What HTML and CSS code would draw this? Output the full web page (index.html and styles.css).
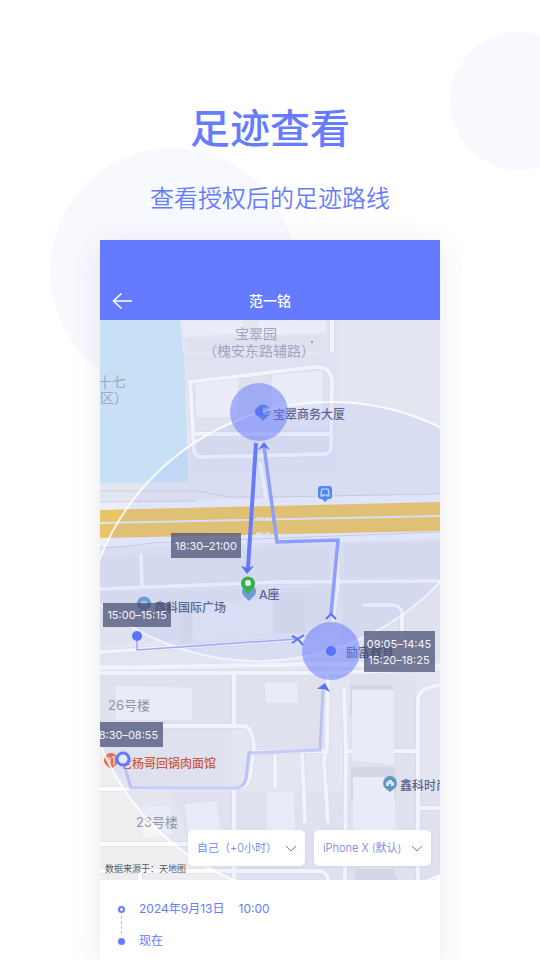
FILE: index.html
```html
<!DOCTYPE html>
<html lang="zh-CN">
<head>
    <meta charset="UTF-8">
    <meta name="viewport" content="width=device-width, initial-scale=1.0">
    <title>足迹查看</title>
    <link rel="stylesheet" href="styles.css">
</head>
<body>

<div class="backdrop">
    <div class="bubble bubble-right"></div>
    <div class="bubble bubble-left"></div>
</div>

<header class="intro">
    <h1>足迹查看</h1>
    <p>查看授权后的足迹路线</p>
</header>

<main class="phone">
    <div class="navbar">
        <button class="back" aria-label="返回">
            <svg width="22" height="18" viewBox="0 0 22 18"><path d="M9.500 1.500 L1.500 9 L9.500 16.500 M2 9 H20" fill="none" stroke="#fff" stroke-width="1.600"/></svg>
        </button>
        <h2>范一铭</h2>
    </div>

    <div class="map">
        <svg class="map-canvas" viewBox="0 0 340 560">
            <rect width="340" height="560" fill="#eeeef0"/>

            <!-- Blocks and water -->
            <path d="M0 0H80L85 50L88 158Q88 162 84 162L0 163Z" fill="#d0e8f6"/>
            <path d="M86 36H220V0H237V152H92Z" fill="#ebebf0"/>
            <g fill="#f6f6f9">
                <path d="M80 0H143V13L84 17ZM158 0H226V12L158 16Z"/>
                <path d="M96 64L138 56V97H96ZM172 55L222 51V92H172Z"/>
            </g>
            <g fill="#e9e9ee">
                <path d="M86 19L220 15V32H88ZM96 98H143V111H96ZM139 56L172 53V90H139ZM97 119H228V131L98 134Z"/>
                <path d="M44 235L230 225V257L45 266ZM0 238L38 236L39 266L0 268ZM244 225L340 221V257H244Z"/>
                <path d="M0 273L232 266V312L0 324ZM242 265H340V341H242Z"/>
                <path d="M63 357H131V468H30L0 430V357ZM138 355H224V428H158L150 406H138ZM138 472H340V560H138ZM250 355H316V560H250ZM70 472H131V521H90Z"/>
            </g>
            <g fill="#dedfe5">
                <path d="M80 284H92V323H80ZM175 273H205V313H175Z" opacity=".5"/>
                <path d="M250 365H292L294 372V395H250ZM251 447H293L296 457V480H251ZM255 549H293L298 560H255Z"/>
            </g>

            <!-- Roads -->
            <g class="road-edge">
                <path d="M0 269L180 262L340 261M0 332L206 319"/>
                <path d="M41 234L42 267M237 218L238 265L233 302M160 142L166 178M0 353H225L340 349"/>
                <path d="M90 60L94 130Q95 137 102 137L225 134Q231 133 231 128L232 60Q230 46 215 47L90 62M94 114H230M232 0V32"/>
                <path d="M263 285H293Q302 286 302 294V318"/>
                <path d="M134 353V405M63 406H145Q153 409 154 428L150 458Q147 468 138 468L0 469M134 470V560M0 524H90M0 551H220Q228 553 228 560M40 552V560"/>
                <path d="M154 432L226 431M228 353L227 428L224 440L228 503M175 435V467M202 433L205 503M244 368L246 430L245 560M246 431H316M340 365Q318 368 318 380V560M319 488H340"/>
            </g>
            <g class="road">
                <path d="M0 186L340 178" stroke-width="8"/>
                <path d="M0 222L340 215" stroke-width="9"/>
                <path d="M0 269L180 262L340 261M0 332L206 319"/>
                <path d="M0 348L230 344L340 346M0 353H225L340 349"/>
                <path d="M41 234L42 267M237 218L238 265L233 302M160 142L166 178"/>
                <path d="M90 60L94 130Q95 137 102 137L225 134Q231 133 231 128L232 60Q230 46 215 47L90 62M94 114H230M232 0V32"/>
                <path d="M263 285H293Q302 286 302 294V318"/>
                <path d="M134 353V405M63 406H145Q153 409 154 428L150 458Q147 468 138 468L0 469M134 470V560M0 524H90M0 551H220Q228 553 228 560M40 552V560"/>
                <path d="M154 432L226 431M228 353L227 428L224 440L228 503M175 435V467M202 433L205 503M244 368L246 430L245 560M246 431H316M340 365Q318 368 318 380V560M319 488H340"/>
            </g>
            <path d="M0 171H97L130 177H160M170 177L340 174M0 182L97 181M0 228L30 226L52 223L340 212" fill="none" stroke="#d6d7de" stroke-width="1"/>
            <path d="M0 190L340 182V195L0 202ZM0 204L340 197V211L0 218Z" fill="#f6cb5a"/>
            <path d="M156 199H174M156 214H170" stroke="#f0eff3" stroke-width="3" stroke-dasharray="7 2"/>

            <!-- Buildings -->
            <g fill="#f5f5f8">
                <path d="M16 366L92 368V400H16ZM165 363H197L198 383H166ZM252 370H294V445L252 440ZM253 457H294L296 520H253ZM167 472H194L195 510H167Z"/>
                <path d="M43 487L70 486L72 515L43 518ZM85 484L117 481L120 512H88Z"/>
                <path d="M93 284L172 279V314L93 320Z" opacity=".5"/>
            </g>

            <!-- Map place names -->
            <g class="area" text-anchor="middle">
                <text x="156" y="19">宝翠园</text>
                <text x="159" y="36">（槐安东路辅路）</text>
            </g>
            <g class="area">
                <text x="-2" y="67">十七</text>
                <text x="0" y="83">区）</text>
            </g>
            <g class="block">
                <text x="8" y="390">26号楼</text>
                <text x="36" y="507">23号楼</text>
            </g>
            <g class="poi">
                <text x="173" y="99">宝翠商务大厦</text>
                <text x="159" y="279">A座</text>
                <text x="54" y="292">鑫科国际广场</text>
                <text x="246" y="337">励富教育</text>
                <text x="300" y="470">鑫科时尚</text>
            </g>
            <text class="food" x="20" y="448">老杨哥回锅肉面馆</text>

            <!-- Place pins -->
            <g>
                <path d="M163 101L157 95A7 7 0 1 1 169 95Z" fill="#4d86b8"/>
                <path d="M169 89Q164 87 163 91Q164 95 169 93" fill="none" stroke="#b5c3f5" stroke-width="1.500"/>
                <path d="M149 281L143 275A7 7 0 1 1 155 275Z" fill="#6f9cc9"/>
                <path d="M44 293L38 287A7 7 0 1 1 50 287Z" fill="#6b9fcb"/>
                <path d="M42 286V282H46V286" fill="none" stroke="#d5def5" stroke-width="1.500"/>
                <path d="M290 472L285 468A7 7 0 1 1 295 468Z" fill="#5c98bd"/>
                <path d="M286 466V462H288V460H292V462H294V466H291V464H289V466Z" fill="#e0ebf5"/>
                <path d="M11 449L6 445A7 7 0 1 1 16 445Z" fill="#f06a3f"/>
                <path d="M8 437V439Q8 441 10 441V445M10 437V441M14 437V445M12 437H15" stroke="#fff" stroke-width="1" fill="none"/>
                <path d="M221 166H229Q232 166 232 169V176Q232 179 229 179H228L225 182L222 179H221Q218 179 218 176V169Q218 166 221 166Z" fill="#4b87f5"/>
                <path d="M222 169H228L229 173V176H227V175H223V176H221V173Z" fill="none" stroke="#e6efff" stroke-width="1.200"/>
            </g>

            <!-- Fence circles -->
            <g fill="#7c93ff" fill-opacity=".09" stroke="#fff" stroke-opacity=".85" stroke-width="2">
                <circle cx="158" cy="92" r="249"/>
                <circle cx="231" cy="331" r="249"/>
            </g>

            <!-- Routes -->
            <g fill="none">
                <path d="M23 441L31 468H138Q145 466 146 458L149 433L220 430L223 368" stroke="#8d9bfa" stroke-opacity=".45" stroke-width="3"/>
                <path d="M37 316V330L198 319" stroke="#9ba7fb" stroke-width="1.500"/>
                <path d="M231 294L238 220L177 222L164 126" stroke="#8f9dfd" stroke-width="3.500"/>
                <path d="M156 123L148 248" stroke="#667cfd" stroke-width="4"/>
            </g>
            <g fill="#5873f6">
                <path d="M141 246L148 248L154 246L147 254Z"/>
                <path d="M164 122L170 130L164 127L158 130Z"/>
                <path d="M225 363L230 372L224 369L217 369Z"/>
            </g>
            <g fill="none" stroke="#5873f6" stroke-width="2">
                <path d="M226 299L231 294L236 299"/>
                <path d="M192 316L198 319L203 325M204 315L198 319L192 323"/>
            </g>
            <g fill="#6679fb" fill-opacity=".52">
                <circle cx="159" cy="92" r="29"/>
                <circle cx="231" cy="331" r="29"/>
            </g>
            <g fill="#5b73f9">
                <circle cx="159" cy="92" r="4"/>
                <circle cx="231" cy="331" r="5"/>
                <circle cx="37" cy="316" r="5"/>
            </g>
            <circle cx="23" cy="439" r="6" fill="#e8ebff" stroke="#627afc" stroke-width="3"/>
            <path d="M148 274L142 267A7 7 0 1 1 154 267Z" fill="#36b04c"/>
            <circle cx="148" cy="263" r="3" fill="#e8f6ee"/>

            <!-- Stay times -->
            <g class="tag-box">
                <rect x="71" y="213" width="70" height="25"/>
                <rect x="3" y="283" width="68" height="24"/>
                <rect x="264" y="311" width="71" height="41"/>
                <rect x="-10" y="402" width="73" height="25"/>
            </g>
            <g class="tag" text-anchor="middle">
                <text x="106" y="230">18:30–21:00</text>
                <text x="37" y="299">15:00–15:15</text>
                <text x="299" y="328">09:05–14:45</text>
                <text x="299" y="344">15:20–18:25</text>
                <text x="25" y="419">08:30–08:55</text>
            </g>
            <circle cx="212" cy="22" r=".7" fill="#222"/>
            <text class="source" x="5" y="552">数据来源于：天地图</text>
        </svg>

        <div class="filters">
            <div class="picker">
                <select aria-label="成员">
                    <option>自己（+0小时）</option>
                </select>
                <svg width="12" height="8" viewBox="0 0 12 8"><path d="M1 1L6 6L11 1" fill="none" stroke="#6b7fec" stroke-width="1"/></svg>
            </div>
            <div class="picker">
                <select aria-label="设备">
                    <option>iPhone X (默认)</option>
                </select>
                <svg width="12" height="8" viewBox="0 0 12 8"><path d="M1 1L6 6L11 1" fill="none" stroke="#6b7fec" stroke-width="1"/></svg>
            </div>
        </div>
    </div>

    <ul class="timeline">
        <li><span class="dot dot-start"></span><span>2024年9月13日</span><span>10:00</span></li>
        <li><span class="dot"></span><span>现在</span></li>
    </ul>
</main>

</body>
</html>
```
FILE: styles.css
```css
* {
    box-sizing: border-box;
}
body {
    margin: 0;
    min-height: 100vh;
    display: flex;
    flex-direction: column;
    position: relative;
    background: #fff;
    color: #667cff;
    font-family: Inter, "Noto Sans CJK SC", sans-serif;
}
h1, h2, p, ul {
    margin: 0;
    padding: 0;
    font-weight: 400;
}

/* Pale circles behind the page */
.backdrop {
    position: absolute;
    inset: 0;
    overflow: hidden;
    z-index: -1;
}
.bubble {
    position: absolute;
    border-radius: 50%;
    background: #f8f9fe;
}
.bubble-right {
    top: 32px;
    right: -48px;
    width: 138px;
    height: 138px;
}
.bubble-left {
    top: 148px;
    left: 50px;
    width: 246px;
    height: 246px;
}

.intro {
    height: 240px;
    padding-top: 99px;
    text-align: center;
}
.intro h1 {
    font-size: 40px;
    line-height: 60px;
    font-weight: 500;
}
.intro p {
    margin-top: 22px;
    font-size: 24px;
    line-height: 36px;
    font-weight: 350;
}

.phone {
    flex: 1;
    display: flex;
    flex-direction: column;
    margin: 0 100px;
    background: #fff;
    box-shadow: 0 6px 28px rgba(70, 80, 120, 0.12);
}
.navbar {
    height: 80px;
    padding: 42px 12px 0;
    display: grid;
    grid-template-columns: 24px 1fr 24px;
    align-items: center;
    background: #657bff;
    color: #fff;
}
.navbar h2 {
    font-size: 14px;
    line-height: 20px;
    font-weight: 500;
    text-align: center;
}
.back {
    display: flex;
    padding: 0;
    border: none;
    background: none;
    cursor: pointer;
}

/* Map */
.map {
    position: relative;
    overflow: hidden;
    border-radius: 0 0 8px 0;
}
.map-canvas {
    display: block;
    width: 100%;
}
.road-edge {
    fill: none;
    stroke: #dddee4;
    stroke-width: 5px;
}
.road {
    fill: none;
    stroke: #fdfdff;
    stroke-width: 4;
}
.road path[stroke-width="8"],
.road path[stroke-width="9"] {
    stroke: #f8f8fc;
}
.area {
    font-size: 14px;
    fill: #a5a8bd;
}
.block {
    font-size: 13px;
    fill: #94959f;
}
.poi {
    font-size: 12px;
    font-weight: 500;
    fill: #565d7c;
}
.food {
    font-size: 12px;
    font-weight: 500;
    fill: #d0562f;
}
.tag-box {
    fill: #474c70;
    fill-opacity: 0.72;
}
.tag {
    font-size: 11px;
    fill: #f3f4fc;
}
.source {
    font-size: 9px;
    fill: #55565c;
}

.filters {
    position: absolute;
    right: 9px;
    bottom: 14px;
    display: flex;
    gap: 9px;
}
.picker {
    position: relative;
}
.picker select {
    width: 117px;
    height: 36px;
    padding: 0 24px 0 9px;
    appearance: none;
    border: none;
    border-radius: 5px;
    background: #fff;
    color: #6b7fec;
    font: 350 11px Inter, "Noto Sans CJK SC", sans-serif;
    box-shadow: 0 1px 3px rgba(90, 100, 160, 0.1);
}
.picker svg {
    position: absolute;
    right: 8px;
    top: 15px;
    pointer-events: none;
}

.timeline {
    padding: 20px 18px 10px;
    list-style: none;
    font-size: 12px;
    line-height: 18px;
}
.timeline li {
    display: flex;
    align-items: center;
    gap: 14px;
    position: relative;
}
.timeline li + li {
    margin-top: 14px;
}
.timeline li + li::before {
    content: "";
    position: absolute;
    left: 3px;
    top: -16px;
    height: 18px;
    border-left: 1px dashed #b4bdf5;
}
.dot {
    width: 7px;
    height: 7px;
    border-radius: 50%;
    background: #667cff;
}
.dot-start {
    border: 2px solid #667cff;
    background: #fff;
}
```
